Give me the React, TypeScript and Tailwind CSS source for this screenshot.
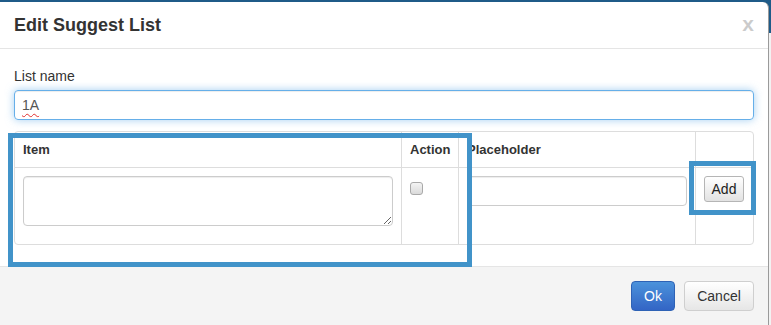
import React from 'react';

const font = "font-['Liberation_Sans',Arial,sans-serif]";

export default function App() {
  return (
    <div
      className={`${font} relative w-[771px] h-[325px] overflow-hidden pt-[2px] pr-[2px] bg-[linear-gradient(to_bottom,#1f5b88_0,#1f5b88_33px,#f2f2f2_33px)] text-[#333]`}
    >
      <div className="w-[769px] h-[400px] bg-white rounded-tr-[6px] border-r border-[#9a9a9a] flex flex-col">
        {/* Header */}
        <div className="h-[47px] flex items-center justify-between px-[14px] border-b border-[#e5e5e5]">
          <h4 className="text-[18px] font-bold leading-[26px] text-[#333]">Edit Suggest List</h4>
          <button className="text-[21px] font-bold leading-none text-black opacity-20 -mt-[4px]">x</button>
        </div>

        {/* Body */}
        <div className="px-[14px] pt-[17px] pb-[21px]">
          <label className="block text-[14px] leading-[20px] text-[#333]">List name</label>
          <div className="mt-[4px] h-[30px] rounded-[4px] border border-[#66afe9] shadow-[inset_0_1px_1px_rgba(0,0,0,0.075),0_0_8px_rgba(102,175,233,0.6)] flex items-center px-[7px] text-[14px] text-[#555]">
            <span className="underline decoration-wavy decoration-[#e03030] decoration-[1px] underline-offset-[3px]">1A</span>
          </div>

          {/* Table */}
          <div className="mt-[11px] border border-[#ddd] rounded-[4px] grid grid-cols-[387px_57px_237px_1fr] text-[13px]">
            <div className="h-[36px] border-r border-b border-[#ddd] px-2 flex items-center font-bold">Item</div>
            <div className="h-[36px] border-r border-b border-[#ddd] px-2 flex items-center font-bold">Action</div>
            <div className="h-[36px] border-r border-b border-[#ddd] px-2 flex items-center font-bold">Placeholder</div>
            <div className="h-[36px] border-b border-[#ddd]"></div>

            <div className="h-[76px] border-r border-[#ddd] p-2">
              <textarea className="block w-full h-[50px] rounded-[4px] border border-[#ccc] shadow-[inset_0_1px_1px_rgba(0,0,0,0.075)] outline-none" />
            </div>
            <div className="h-[76px] border-r border-[#ddd] p-2">
              <div className="mt-[6px] w-[13px] h-[13px] rounded-[3px] border border-[#a9a9a9] bg-[linear-gradient(to_bottom,#f4f4f4,#dadada)]"></div>
            </div>
            <div className="h-[76px] border-r border-[#ddd] p-2">
              <div className="h-[30px] rounded-[4px] border border-[#ccc] shadow-[inset_0_1px_1px_rgba(0,0,0,0.075)]"></div>
            </div>
            <div className="h-[76px] p-2">
              <button className="w-[40px] h-[26px] rounded-[3px] border border-[#b5b5b5] bg-[linear-gradient(to_bottom,#ffffff,#e2e2e2)] text-[14px] text-[#222]">
                Add
              </button>
            </div>
          </div>
        </div>

        {/* Footer */}
        <div className="flex-1 bg-[#f4f4f4] border-t border-[#e5e5e5] pt-[14px] px-[14px] flex justify-end gap-[9px]">
          <button className="w-[44px] h-[30px] rounded-[4px] border border-[#2e62b5] bg-[linear-gradient(to_bottom,#4b92db,#3365c5)] text-white text-[14px]">
            Ok
          </button>
          <button className="w-[70px] h-[30px] rounded-[4px] border border-[#cfcfcf] bg-[linear-gradient(to_bottom,#ffffff,#e6e6e6)] text-[#333] text-[14px]">
            Cancel
          </button>
        </div>
      </div>

      {/* Highlight annotations */}
      <div className="absolute left-[8px] top-[133px] w-[464px] h-[134px] border-[5px] border-[#4193c9]"></div>
      <div className="absolute left-[689px] top-[161px] w-[67px] h-[54px] border-[5px] border-[#4193c9]"></div>
    </div>
  );
}
